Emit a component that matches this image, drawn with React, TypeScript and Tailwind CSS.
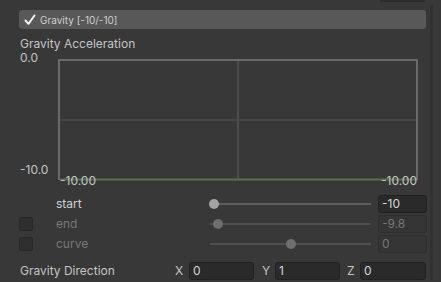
import React from "react"

const font = { fontFamily: "Inter, 'Noto Sans', sans-serif" }

function Field({ value, dim, className }: { value: string; dim?: boolean; className: string }) {
  return (
    <div
      className={`h-[18px] rounded-[3px] border flex items-center pl-[3px] text-[12px] leading-none ${
        dim ? "bg-[#353535] border-[#2e2e2e] text-[#777]" : "bg-[#2a2a2a] border-[#212121] text-[#d6d6d6]"
      } ${className}`}
    >
      {value}
    </div>
  )
}

function SliderRow({
  label,
  value,
  thumb,
  dim,
  check,
}: {
  label: string
  value: string
  thumb: number
  dim?: boolean
  check?: boolean
}) {
  return (
    <div className="flex items-center h-[20px]">
      <div className="w-[56px] pl-[19px] flex items-center">
        {check && <div className="w-[14px] h-[14px] rounded-[2px] bg-[#2f2f2f] border border-[#292929]" />}
      </div>
      <div className={`w-[149px] text-[12px] leading-none ${dim ? "text-[#777]" : "text-[#d0d0d0]"}`}>{label}</div>
      <div className="w-[166px] pl-[5px]">
        <div className="relative h-[10px] flex items-center">
          <div className={`w-full h-[2px] ${dim ? "bg-[#4e4e4e]" : "bg-[#5e5e5e]"}`} />
          <div
            className={`absolute top-0 w-[10px] h-[10px] rounded-full ${dim ? "bg-[#6e6e6e]" : "bg-[#a3a3a3]"}`}
            style={{ left: thumb - 5 }}
          />
        </div>
      </div>
      <Field value={value} dim={dim} className="ml-[7px] w-[49px]" />
    </div>
  )
}

export default function App() {
  return (
    <div className="w-[441px] h-[282px] bg-[#383838] overflow-hidden text-[#c4c4c4]" style={font}>
      <div className="h-[3px] flex">
        <div className="ml-[380px] w-[45px] h-[2px] bg-[#2c2c2c]" />
      </div>
      <div className="flex">
        <div className="w-[430px]">
          <div className="mt-[7px] ml-[19px] w-[407px] h-[19px] rounded-[3px] bg-[#585858] flex items-center pl-[5px]">
            <svg width="12" height="12" viewBox="0 0 12 12">
              <path d="M1.5 6.5 L4.5 9.8 L10.5 1.5" fill="none" stroke="#f2f2f2" strokeWidth="2" strokeLinecap="round" strokeLinejoin="round" />
            </svg>
            <span className="ml-[4px] text-[10px] leading-none text-[#cfcfcf]">Gravity [-10/-10]</span>
          </div>

          <div className="mt-[8px] pl-[20px] h-[14px] text-[12px] leading-[14px]">Gravity Acceleration</div>

          <div className="relative h-[137px]">
            <svg className="absolute left-0 top-0" width="430" height="137">
              <line x1="59" y1="9" x2="59" y2="129" stroke="#6a6a6a" strokeWidth="2" />
              <line x1="58" y1="9" x2="418" y2="9" stroke="#6a6a6a" strokeWidth="2" />
              <line x1="417" y1="8" x2="417" y2="129" stroke="#6a6a6a" strokeWidth="2" />
              <line x1="60" y1="69" x2="416" y2="69" stroke="#474747" strokeWidth="2" />
              <line x1="238" y1="10" x2="238" y2="128" stroke="#4c4c4c" strokeWidth="2" />
              <line x1="60" y1="128.5" x2="416" y2="128.5" stroke="#56704a" strokeWidth="2" />
            </svg>
            <div className="absolute left-[20px] top-[0px] text-[12px] leading-[14px]">0.0</div>
            <div className="absolute left-[20px] top-[112px] text-[12px] leading-[14px]">-10.0</div>
            <div className="absolute left-[60px] top-[123px] text-[12px] leading-[14px]">-10.00</div>
            <div className="absolute right-[13px] top-[123px] text-[12px] leading-[14px]">-10.00</div>
          </div>

          <div className="mt-[6px]">
            <SliderRow label="start" value="-10" thumb={4} />
            <SliderRow label="end" value="-9.8" thumb={8} dim check />
            <SliderRow label="curve" value="0" thumb={81} dim check />
          </div>

          <div className="mt-[8px] flex items-center h-[18px] text-[12px] leading-none">
            <div className="pl-[20px] w-[175px]">Gravity Direction</div>
            <div className="w-[14px]">X</div>
            <Field value="0" className="w-[65px]" />
            <div className="ml-[8px] w-[13px]">Y</div>
            <Field value="1" className="w-[65px]" />
            <div className="ml-[7px] w-[13px]">Z</div>
            <Field value="0" className="w-[66px]" />
          </div>
        </div>
        <div className="mt-[2px] w-[3px] bg-[#313131]" />
      </div>
    </div>
  )
}
